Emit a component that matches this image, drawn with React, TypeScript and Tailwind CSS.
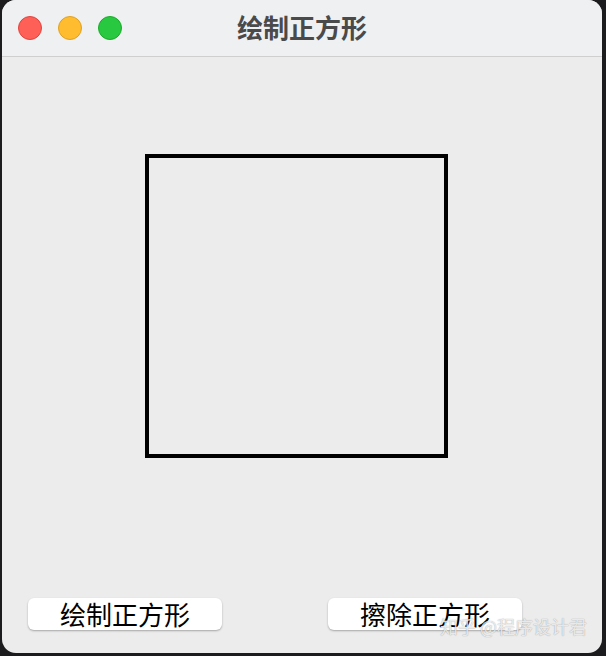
export default function App() {
  const cjk = { fontFamily: "'Noto Sans CJK SC', 'Noto Sans', sans-serif" };

  return (
    <div className="w-[606px] h-[656px] bg-[#1c1c1e] overflow-hidden" style={cjk}>
      <div className="relative ml-[2px] w-[600px] h-[653px] rounded-[14px] bg-[#ececec] overflow-hidden flex flex-col">
        {/* title bar */}
        <div className="h-[57px] shrink-0 flex items-center bg-[#eff0f2] border-b border-[#cfcfcf] relative">
          <div className="flex items-center gap-[16px] pl-[16px]">
            <span className="w-[24px] h-[24px] rounded-full bg-[#fe5f57] border border-[#e0443e]" />
            <span className="w-[24px] h-[24px] rounded-full bg-[#febc2e] border border-[#dea123]" />
            <span className="w-[24px] h-[24px] rounded-full bg-[#28c840] border border-[#1aab29]" />
          </div>
          <div className="absolute inset-0 flex items-center justify-center pb-[3px] text-[26px] font-bold text-[#4a4a4a] pointer-events-none">
            绘制正方形
          </div>
        </div>

        {/* canvas */}
        <div className="pl-[143px] pt-[97px]">
          <div className="w-[303px] h-[304px] border-[4px] border-black" />
        </div>

        {/* buttons */}
        <div className="flex pt-[140px] pl-[26px] gap-[106px]">
          <button className="w-[194px] h-[32px] bg-white rounded-[6px] shadow-[0_1px_2px_rgba(0,0,0,0.3)] text-[26px] leading-[32px] text-black">
            绘制正方形
          </button>
          <button className="w-[194px] h-[32px] bg-white rounded-[6px] shadow-[0_1px_2px_rgba(0,0,0,0.3)] text-[26px] leading-[32px] text-black">
            擦除正方形
          </button>
        </div>

        {/* watermark */}
        <div className="absolute left-[438px] top-[614px] text-[18px] leading-[24px] text-white/80 [text-shadow:0_0_1px_rgba(0,0,0,0.45)] whitespace-nowrap">
          知乎 @程序设计君
        </div>
      </div>
    </div>
  );
}
